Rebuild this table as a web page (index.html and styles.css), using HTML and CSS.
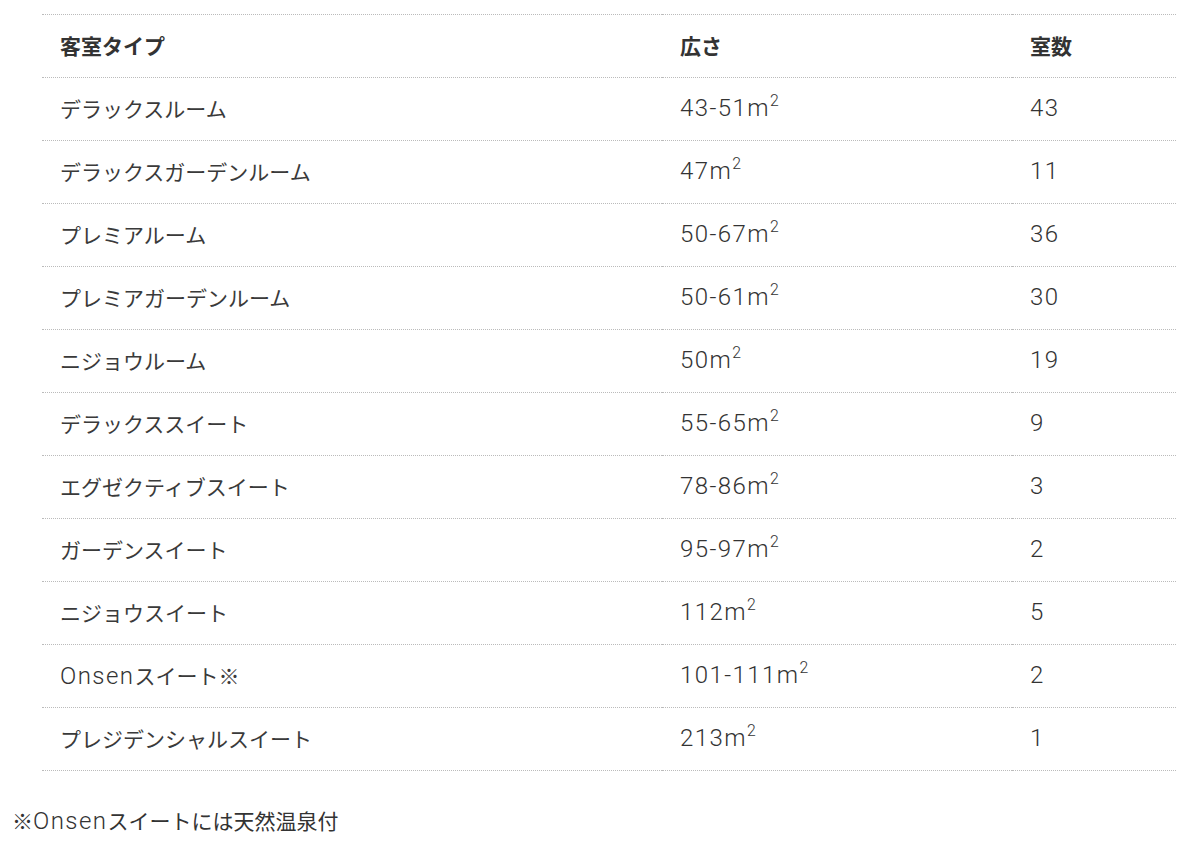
FILE: index.html
```html
<!DOCTYPE html>
<html lang="ja">
<head>
<meta charset="utf-8">
<title>客室タイプ</title>
<link rel="stylesheet" href="styles.css">
</head>
<body>
<div class="page">
  <table class="rooms">
    <thead>
      <tr><th class="c1">客室タイプ</th><th class="c2">広さ</th><th class="c3">室数</th></tr>
    </thead>
    <tbody>
      <tr><td>デラックスルーム</td><td class="num">43-51m<sup>2</sup></td><td class="num">43</td></tr>
      <tr><td>デラックスガーデンルーム</td><td class="num">47m<sup>2</sup></td><td class="num">11</td></tr>
      <tr><td>プレミアルーム</td><td class="num">50-67m<sup>2</sup></td><td class="num">36</td></tr>
      <tr><td>プレミアガーデンルーム</td><td class="num">50-61m<sup>2</sup></td><td class="num">30</td></tr>
      <tr><td>ニジョウルーム</td><td class="num">50m<sup>2</sup></td><td class="num">19</td></tr>
      <tr><td>デラックススイート</td><td class="num">55-65m<sup>2</sup></td><td class="num">9</td></tr>
      <tr><td>エグゼクティブスイート</td><td class="num">78-86m<sup>2</sup></td><td class="num">3</td></tr>
      <tr><td>ガーデンスイート</td><td class="num">95-97m<sup>2</sup></td><td class="num">2</td></tr>
      <tr><td>ニジョウスイート</td><td class="num">112m<sup>2</sup></td><td class="num">5</td></tr>
      <tr><td><span class="lat">Onsen</span>スイート※</td><td class="num">101-111m<sup>2</sup></td><td class="num">2</td></tr>
      <tr><td>プレジデンシャルスイート</td><td class="num">213m<sup>2</sup></td><td class="num">1</td></tr>
    </tbody>
  </table>
  <p class="note">※<span class="lat">Onsen</span>スイートには天然温泉付</p>
</div>
</body>
</html>
```

FILE: styles.css
```css
html, body {
  margin: 0;
  padding: 0;
  background: #fff;
}
body {
  font-family: "Noto Sans CJK JP", sans-serif;
  color: #333;
  font-size: 21px;
}
.page {
  padding: 14px 24px 0 12px;
}
.rooms {
  margin-left: 30px;
  width: 1134px;
  border-collapse: collapse;
  border-top: 1px dotted #bbb;
}
.rooms tr {
  border-bottom: 1px dotted #bbb;
}
.rooms th, .rooms td {
  height: 60px;
  padding: 0 0 2px 18px;
  text-align: left;
  vertical-align: middle;
  line-height: 30px;
}
.rooms th {
  font-weight: bold;
  color: #333;
}
.rooms td {
  color: #3a3a3a;
}
.c1 { width: 602px; }
.c2 { width: 332px; }
.lat,
.rooms td.num {
  font-family: Roboto, "Liberation Sans", "Noto Sans CJK JP", sans-serif;
  font-weight: 300;
  font-size: 24px;
  letter-spacing: 0.06em;
  color: #333;
}
.rooms sup {
  font-size: 0.66em;
  line-height: 0;
  vertical-align: 0.62em;
  letter-spacing: 0;
}
.note {
  margin: 34px 0 0 0;
  line-height: 30px;
  color: #333;
}
```
